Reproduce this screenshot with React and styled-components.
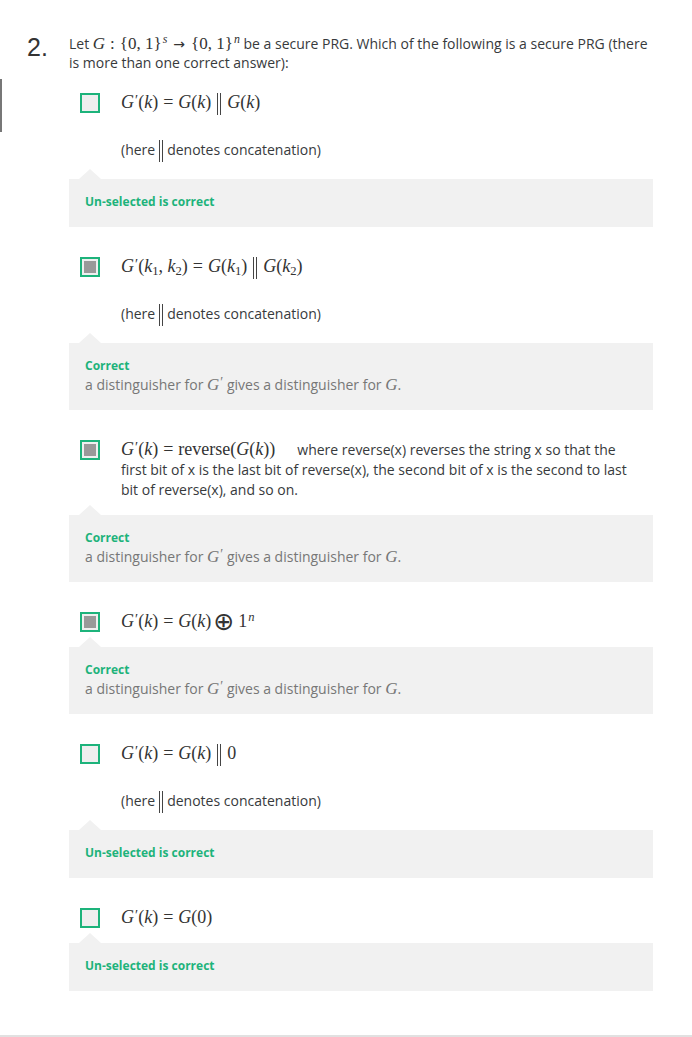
import styled, { createGlobalStyle } from "styled-components";

const GlobalStyle = createGlobalStyle`
  html, body {
    margin: 0;
    padding: 0;
    background: #fff;
  }
  body {
    font-family: "Open Sans", "Liberation Sans", sans-serif;
    color: #373a3c;
  }
`;

const GREEN = "#1db37b";

const Page = styled.div`
  position: relative;
  width: 692px;
  padding-top: 34px;
  box-sizing: border-box;

  &::before {
    content: "";
    position: absolute;
    left: 0;
    top: 79px;
    width: 2px;
    height: 53px;
    background: #777;
  }
`;

const Question = styled.div`
  display: flex;
  padding: 0 39px 0 27px;
`;

const Number = styled.div`
  width: 42px;
  flex-shrink: 0;
  margin-top: 1px;
  font-family: "Liberation Sans", Arial, sans-serif;
  font-size: 25px;
  line-height: 25px;
  color: #333;
`;

const Body = styled.div`
  flex: 1;
  min-width: 0;
`;

const Prompt = styled.p`
  margin: 0;
  font-size: 14px;
  line-height: 19px;
`;

const Options = styled.div`
  margin-top: 21px;
`;

const Row = styled.div`
  display: flex;
  align-items: flex-start;
`;

const Box = styled.span`
  flex-shrink: 0;
  width: 20px;
  height: 20px;
  margin-left: 11px;
  box-sizing: border-box;
  border: 2px solid ${GREEN};
  background: #efefef;
  padding: 2px;
  display: flex;

  &::after {
    content: "";
    flex: 1;
    background: ${(p) => (p.$checked ? "#999" : "transparent")};
  }
`;

const Content = styled.div`
  margin-left: 21px;
  max-width: 512px;
  font-size: 14px;
  line-height: 20px;
`;

const MathLine = styled.div`
  height: ${(p) => (p.$free ? "auto" : "20px")};
`;

const Note = styled.p`
  margin: 27px 0 4px;
`;

const Feedback = styled.div`
  position: relative;
  margin: 15px 0 ${(p) => (p.$last ? 0 : 30)}px;
  padding: 13px 16px 15px;
  background: #f1f1f1;
  font-size: 14px;
  line-height: 20px;

  &::before {
    content: "";
    position: absolute;
    left: 10px;
    top: -10px;
    border-left: 11px solid transparent;
    border-right: 11px solid transparent;
    border-bottom: 10px solid #f1f1f1;
  }
`;

const Verdict = styled.div`
  font-size: 12px;
  font-weight: 700;
  color: ${GREEN};
`;

const Explain = styled.div`
  color: #777;
  margin-top: -1px;
`;

const Divider = styled.div`
  margin-top: 44px;
  height: 2px;
  background: #e1e1e1;
`;

const Math = styled.span`
  font-family: "Liberation Serif", "Times New Roman", serif;
  font-size: ${(p) => p.$size || 18}px;
  line-height: 1;
  white-space: nowrap;
  color: ${(p) => p.$color || "#333"};
`;

const V = styled.i`
  font-style: italic;
`;

const Prime = styled.span`
  font-size: 0.8em;
  margin-left: 1px;
  vertical-align: 0.2em;
  line-height: 0;
`;

const Sup = styled.sup`
  font-size: 0.7em;
  line-height: 0;
  vertical-align: 0.5em;
  font-style: italic;
  margin-left: 1px;
`;

const Sub = styled.sub`
  font-size: 0.7em;
  line-height: 0;
  vertical-align: -0.25em;
`;

const Rel = styled.span`
  margin: 0 ${(p) => p.$gap || 5}px;
`;

const Arrow = styled.span`
  font-family: "DejaVu Sans", sans-serif;
  font-size: 14px;
  margin: 0 6px;
`;

const Concat = styled.span`
  display: inline-block;
  width: 2px;
  height: ${(p) => p.$h || 22}px;
  margin: -5px ${(p) => p.$gap || 6}px;
  border-left: 1px solid #444;
  border-right: 1px solid #444;
  vertical-align: middle;
`;

const Oplus = styled.span`
  font-family: "DejaVu Sans", sans-serif;
  font-size: 25px;
  line-height: 0;
  margin: 0 4px 0 2px;
  vertical-align: -3px;
`;

const Gp = () => (
  <>
    <V>G</V>
    <Prime>′</Prime>
  </>
);

const Gk = ({ arg = <V>k</V> }) => (
  <>
    <V>G</V>({arg})
  </>
);

const ConcatNote = () => (
  <Note>
    (here
    <Concat $h={22} $gap={4} />
    denotes concatenation)
  </Note>
);

const Distinguisher = () => (
  <Explain>
    a distinguisher for{" "}
    <Math $size={17} $color="#777">
      <Gp />
    </Math>{" "}
    gives a distinguisher for{" "}
    <Math $size={17} $color="#777">
      <V>G</V>
    </Math>
    .
  </Explain>
);

const options = [
  {
    checked: false,
    math: (
      <Math>
        <Gp />(<V>k</V>)<Rel>=</Rel>
        <Gk />
        <Concat />
        <Gk />
      </Math>
    ),
    note: true,
    verdict: "Un-selected is correct",
  },
  {
    checked: true,
    math: (
      <Math>
        <Gp />(<V>k</V>
        <Sub>1</Sub>, <V>k</V>
        <Sub>2</Sub>)<Rel>=</Rel>
        <V>G</V>(<V>k</V>
        <Sub>1</Sub>)<Concat />
        <V>G</V>(<V>k</V>
        <Sub>2</Sub>)
      </Math>
    ),
    note: true,
    verdict: "Correct",
    explain: true,
  },
  {
    checked: true,
    free: true,
    math: (
      <>
        <Math>
          <Gp />(<V>k</V>)<Rel>=</Rel>reverse(
          <Gk />)
        </Math>
        <span style={{ marginLeft: 22 }}>
          where reverse(x) reverses the string x so that the first bit of x is the
          last bit of reverse(x), the second bit of x is the second to last bit of
          reverse(x), and so on.
        </span>
      </>
    ),
    verdict: "Correct",
    explain: true,
  },
  {
    checked: true,
    math: (
      <Math>
        <Gp />(<V>k</V>)<Rel>=</Rel>
        <Gk />
        <Oplus>⊕</Oplus>1<Sup>n</Sup>
      </Math>
    ),
    verdict: "Correct",
    explain: true,
  },
  {
    checked: false,
    math: (
      <Math>
        <Gp />(<V>k</V>)<Rel>=</Rel>
        <Gk />
        <Concat />0
      </Math>
    ),
    note: true,
    verdict: "Un-selected is correct",
  },
  {
    checked: false,
    math: (
      <Math>
        <Gp />(<V>k</V>)<Rel>=</Rel>
        <Gk arg="0" />
      </Math>
    ),
    verdict: "Un-selected is correct",
  },
];

export default function App() {
  return (
    <>
      <GlobalStyle />
      <Page>
        <Question>
          <Number>2.</Number>
          <Body>
            <Prompt>
              Let{" "}
              <Math $size={17}>
                <V>G</V>
                <Rel $gap={5}>:</Rel>
                {"{"}0, 1{"}"}
                <Sup>s</Sup>
                <Arrow>→</Arrow>
                {"{"}0, 1{"}"}
                <Sup>n</Sup>
              </Math>{" "}
              be a secure PRG. Which of the following is a secure PRG (there is
              more than one correct answer):
            </Prompt>
            <Options>
              {options.map((o, i) => (
                <div key={i}>
                  <Row>
                    <Box $checked={o.checked} />
                    <Content>
                      <MathLine $free={o.free}>{o.math}</MathLine>
                      {o.note && <ConcatNote />}
                    </Content>
                  </Row>
                  <Feedback $last={i === options.length - 1}>
                    <Verdict>{o.verdict}</Verdict>
                    {o.explain && <Distinguisher />}
                  </Feedback>
                </div>
              ))}
            </Options>
          </Body>
        </Question>
        <Divider />
      </Page>
    </>
  );
}
